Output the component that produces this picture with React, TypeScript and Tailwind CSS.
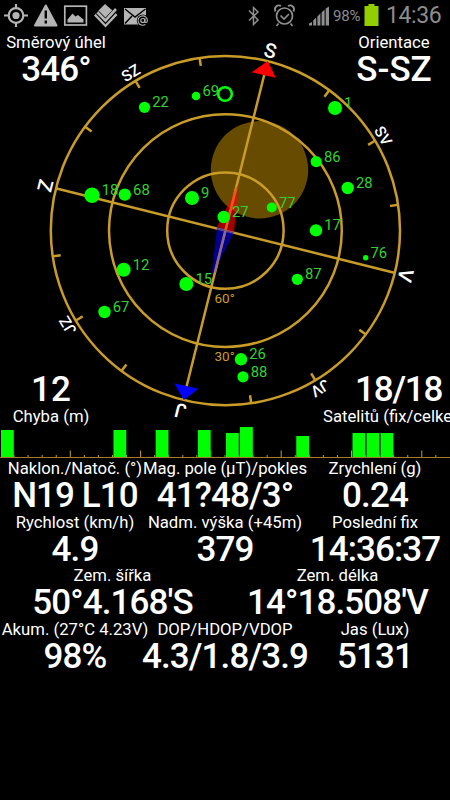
import React from "react";

const GOLD = "#c99c28";
const GREEN = "#00ff00";

function StatusBar() {
  return (
    <header className="flex h-[33px] items-center text-[#b4b4b4]">
      <svg width="160" height="33" viewBox="0 0 160 33" fill="none" stroke="currentColor">
        <circle cx="16" cy="15.5" r="7.3" strokeWidth="2.2" />
        <circle cx="16" cy="15.5" r="3.6" fill="currentColor" stroke="none" />
        <path d="M16 4v4M16 23v4M4 15.5h4M24 15.5h4" strokeWidth="2.2" />
        <path d="M45.8 5.5 56.5 25.5h-21.5Z" fill="currentColor" strokeWidth="2" strokeLinejoin="round" />
        <path d="M45.8 10.5v8M45.8 20.5v3" stroke="#000" strokeWidth="2.4" />
        <rect x="64.8" y="6.2" width="21.6" height="18.8" strokeWidth="1.7" />
        <path d="M67.5 22.5v-3l5-6 3 3 2.5-1.5 5.5 4.5v3Z" fill="currentColor" stroke="none" />
        <path d="M104.5 4 111.500 10.500 105.500 16 99.500 10 94 15.500 105.500 27.500 117.500 15 114.500 12Z" fill="currentColor" stroke="none" />
        <path d="M97.500 12.500 105.500 20.800 116 9.500" stroke="#000" strokeWidth="4.600" />
        <path d="M97.500 12.500 105.500 20.500 116 9" strokeWidth="2.600" />
        <path d="M105 4 112 10.500 105.500 17 98.500 10.500Z" fill="currentColor" stroke="none" />
        <rect x="124" y="8" width="22" height="16.5" fill="currentColor" stroke="none" />
        <path d="m125 9 10 8 10.500-8M125 23.500l7-7.500" stroke="#000" strokeWidth="1.4" />
        <circle cx="142.800" cy="20.500" r="6" fill="#000" stroke="none" />
        <circle cx="142.800" cy="20.500" r="2" strokeWidth="1.2" />
        <path d="M144.900 18.300v3.200c0 1.500 2.500 1.500 2.500-1a4.700 4.700 0 1 0-2 3.900" strokeWidth="1.100" />
      </svg>
      <svg className="ml-auto text-[#8f8f8f]" width="90" height="33" viewBox="240 0 90 33" fill="none" stroke="currentColor">
        <path d="m249 10.500 9 9.500-4.500 4.500v-17L258 12l-9 8.500" strokeWidth="1.500" />
        <circle cx="284.500" cy="16" r="8" strokeWidth="1.700" />
        <path d="m280.500 15.500 3.500 3.500 5-5M278.500 23.500l-2 2.500M290.500 23.500l2 2.500" strokeWidth="1.700" />
        <path d="m275.500 11.500c-2-4 2-7.500 5.500-5.500M293.500 11.500c2-4-2-7.500-5.500-5.500" strokeWidth="1.800" />
        <path d="M309 25.500v-2l3-1.500v3.500ZM313.200 25.500v-5l3-3v8ZM317.400 25.500v-9l3-3v12ZM321.600 25.500v-13l3-3v16ZM325.700 25.500v-17l3.300-2v19Z" fill="currentColor" stroke="none" />
      </svg>
      <span className="ml-[3px] w-[31px] text-[15px] tracking-[-0.2px] text-[#8c8c8c]">98%</span>
      <svg width="15" height="33" viewBox="0 0 15 33" className="mr-[7px]">
        <path d="M4.500 4h6v2h4v20h-14V6h4Z" fill="#93cf00" />
      </svg>
      <span className="w-[64px] text-[23px] tracking-[-0.4px] text-[#8c8c8c]">14:36</span>
    </header>
  );
}

const ticks = [1, 2, 3, 5, 6, 7, 9, 10, 11, 13, 14, 15];

const directions = [
  { name: "S", turn: 14, size: 20 },
  { name: "SV", turn: 59, size: 15.5 },
  { name: "V", turn: 104, size: 20 },
  { name: "JV", turn: 149, size: 15.5 },
  { name: "J", turn: 194, size: 20 },
  { name: "JZ", turn: 239, size: 15.5 },
  { name: "Z", turn: 284, size: 20 },
  { name: "SZ", turn: 329, size: 15.5 },
];

const satellites = [
  { id: "22", x: 144.500, y: 107.300, r: 5.600 },
  { id: "69", x: 196, y: 96, r: 4.300 },
  { id: "1", x: 335, y: 108, r: 7 },
  { id: "86", x: 316.200, y: 161.600, r: 5.600 },
  { id: "28", x: 347.700, y: 188, r: 6.200 },
  { id: "77", x: 271.800, y: 207.500, r: 5 },
  { id: "27", x: 223.700, y: 217, r: 6.200 },
  { id: "17", x: 316, y: 230.400, r: 6.200 },
  { id: "76", x: 365.700, y: 257.700, r: 2.700 },
  { id: "87", x: 297.300, y: 279.300, r: 5.600 },
  { id: "18", x: 92, y: 195.200, r: 7.700 },
  { id: "68", x: 124.800, y: 194.600, r: 6.200 },
  { id: "9", x: 192, y: 198, r: 7 },
  { id: "12", x: 123.700, y: 269.700, r: 7 },
  { id: "15", x: 186.300, y: 284, r: 7 },
  { id: "67", x: 104.500, y: 312, r: 6.200 },
  { id: "26", x: 241, y: 359.300, r: 6.200 },
  { id: "88", x: 243, y: 376.800, r: 5.600 },
];

function Compass() {
  return (
    <svg className="[grid-area:1/1]" width="450" height="394" viewBox="0 33 450 394">
      <circle cx="259.500" cy="169.800" r="48.700" fill="#664b00" />
      <g fill="none" stroke={GOLD} strokeWidth="2.500">
        <circle cx="225.400" cy="230.600" r="174.600" />
        <circle cx="225.400" cy="230.600" r="116.400" />
        <circle cx="225.400" cy="230.600" r="58.200" />
        <g transform="translate(225.400 230.600) rotate(14)">
          <path d="M0-174V174M-174 0H174" />
          {ticks.map((n) => (
            <path key={n} d="M0-174V-166.500" transform={`rotate(${n * 22.5})`} />
          ))}
        </g>
      </g>
      <path d="M238.500 184 217 227l17 5.500Z" fill="#ff0000" opacity=".62" />
      <path d="M211.500 276 217 227l17 5.500Z" fill="#0000ff" opacity=".55" />
      <path d="m225.400 230.600 11-43" stroke="#e8641c" strokeWidth="2.500" opacity=".7" />
      <path d="m225.400 230.600-10.500 42" stroke="#9a6a86" strokeWidth="2.500" opacity=".9" />
      <path d="M267.800 61 251.700 72.300l24 5.500Z" fill="#ff0000" />
      <path d="m183.800 400-9.500-16.800 24 5.500Z" fill="#0000ff" />
      <g fill="#fff" fontWeight="500" textAnchor="middle">
        {directions.map((d) => (
          <text key={d.name} y="-178.500" fontSize={d.size} transform={`translate(225.400 230.600) rotate(${d.turn})`}>
            {d.name}
          </text>
        ))}
      </g>
      <g fill={GOLD} fontSize="13.500">
        <text x="214.500" y="302.500">60°</text>
        <text x="214.500" y="361">30°</text>
      </g>
      <g fill={GREEN}>
        {satellites.map((s) => (
          <circle key={s.id} cx={s.x} cy={s.y} r={s.r} />
        ))}
      </g>
      <circle cx="225" cy="94" r="6.800" fill="none" stroke={GREEN} strokeWidth="2.600" />
      <g fill="#32d232" fontSize="14.800">
        {satellites.map((s) => (
          <text key={s.id} x={s.x + s.r + 2.100} y={s.y}>
            {s.id}
          </text>
        ))}
      </g>
    </svg>
  );
}

const SLOT = 14.06;
const bars = [
  { slot: 0, h: 28 },
  { slot: 8, h: 28 },
  { slot: 11, h: 28 },
  { slot: 14, h: 28 },
  { slot: 16, h: 25 },
  { slot: 17, h: 31 },
  { slot: 21, h: 22 },
  { slot: 25, h: 25 },
  { slot: 26, h: 25 },
  { slot: 27, h: 25 },
];

function SignalChart() {
  return (
    <svg width="450" height="32" viewBox="0 0 450 32">
      {Array.from({ length: 31 }, (_, i) => i + 1).map((i) => (
        <path key={i} d={`M${i * SLOT} 30v${i % 5 === 0 ? -6.500 : -2}`} stroke={GOLD} />
      ))}
      {bars.map((b) => (
        <rect key={b.slot} x={b.slot * SLOT + 1} y={31 - b.h} width="12.800" height={b.h} fill={GREEN} />
      ))}
      <path d="M0 30.500H450" stroke="#a87a28" />
    </svg>
  );
}

function Label({ children, className = "" }: { children: string; className?: string }) {
  return <span className={`text-[16.700px] leading-5 ${className}`}>{children}</span>;
}

function Value({ children, className = "tracking-[-0.900px]" }: { children: string; className?: string }) {
  return <span className={`text-[35px] font-medium leading-[33.600px] ${className}`}>{children}</span>;
}

function Stat({ label, value }: { label: string; value: string }) {
  return (
    <div className="flex w-0 flex-1 flex-col items-center whitespace-nowrap">
      <Label>{label}</Label>
      <Value>{value}</Value>
    </div>
  );
}

const rows = [
  [
    ["Naklon./Natoč. (°)", "N19 L10"],
    ["Mag. pole (µT)/pokles", "41?48/3°"],
    ["Zrychlení (g)", "0.24"],
  ],
  [
    ["Rychlost (km/h)", "4.9"],
    ["Nadm. výška (+45m)", "379"],
    ["Poslední fix", "14:36:37"],
  ],
  [
    ["Zem. šířka", "50°4.168'S"],
    ["Zem. délka", "14°18.508'V"],
  ],
  [
    ["Akum. (27°C 4.23V)", "98%"],
    ["DOP/HDOP/VDOP", "4.3/1.8/3.9"],
    ["Jas (Lux)", "5131"],
  ],
];

export default function App() {
  return (
    <main className="h-[800px] w-[450px] overflow-hidden bg-black font-[Roboto,sans-serif] text-white">
      <StatusBar />
      <section className="grid h-[394px] w-[450px] grid-cols-[450px]">
        <Compass />
        <div className="flex flex-col justify-between whitespace-nowrap [grid-area:1/1]">
          <div className="flex justify-between">
            <div className="flex w-[112px] flex-col items-center">
              <Label>Směrový úhel</Label>
              <Value>346°</Value>
            </div>
            <div className="flex w-[112px] flex-col items-center">
              <Label>Orientace</Label>
              <Value className="tracking-normal">S-SZ</Value>
            </div>
          </div>
          <div className="flex justify-between">
            <div className="flex w-[102px] flex-col items-center">
              <Value className="tracking-normal">12</Value>
              <Label>Chyba (m)</Label>
            </div>
            <div className="flex w-[127px] flex-col overflow-hidden">
              <Value className="pl-[32px] tracking-[-1.200px]">18/18</Value>
              <Label>Satelitů (fix/celkem)</Label>
            </div>
          </div>
        </div>
      </section>
      <SignalChart />
      <section className="flex flex-col">
        {rows.map((row, i) => (
          <div key={i} className="flex h-[53.600px]">
            {row.map(([label, value]) => (
              <Stat key={label} label={label} value={value} />
            ))}
          </div>
        ))}
      </section>
    </main>
  );
}
